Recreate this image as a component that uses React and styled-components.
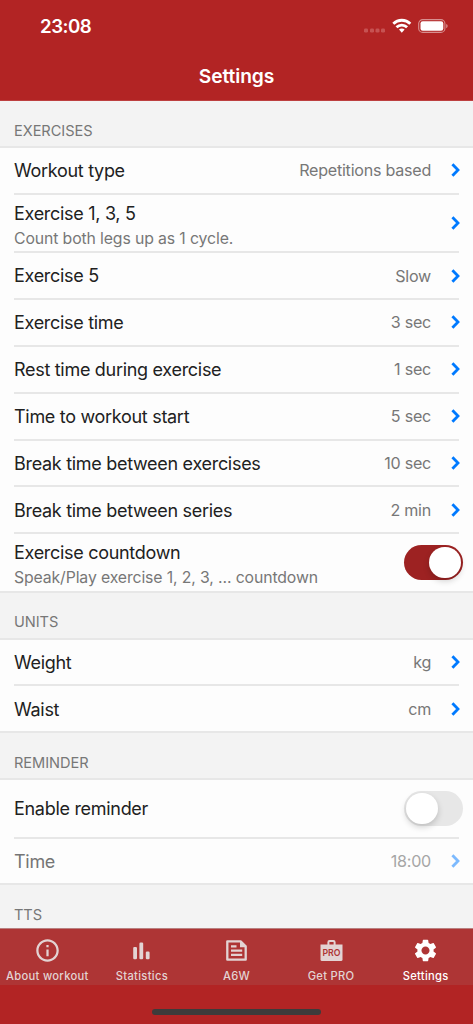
import React from 'react';
import styled, { createGlobalStyle } from 'styled-components';
import { MdInfoOutline, MdSettings } from 'react-icons/md';

const GlobalStyle = createGlobalStyle`
  * {
    box-sizing: border-box;
  }

  body {
    margin: 0;
    background: #fdfdfd;
    font-family: Inter, 'Liberation Sans', sans-serif;
  }
`;

const Screen = styled.div`
  width: 473px;
  height: 1024px;
  display: flex;
  flex-direction: column;
  overflow: hidden;
  background: #fdfdfd;
`;

const Header = styled.header`
  flex: none;
  height: 101px;
  background: #b22424;
  border-bottom: 1px solid #bd4040;
  color: #fff;
`;

const StatusBar = styled.div`
  height: 52px;
  padding: 0 24px 0 40px;
  display: flex;
  align-items: center;
  justify-content: space-between;
`;

const Clock = styled.span`
  font-size: 18.7px;
  font-weight: 600;
  letter-spacing: -0.5px;
`;

const Title = styled.h1`
  margin: 0;
  height: 48px;
  line-height: 48px;
  text-align: center;
  font-size: 19.2px;
  font-weight: 600;
  letter-spacing: -0.1px;
`;

const List = styled.main`
  flex: 1;
  min-height: 0;
  overflow: hidden;
`;

const SectionTitle = styled.h2`
  margin: 0;
  height: 46.95px;
  padding: 14.7px 14px 0;
  line-height: 30px;
  background: #f3f3f3;
  border-bottom: 2px solid #e7e7e7;
  color: #777;
  font-size: 14.6px;
  font-weight: 400;
  letter-spacing: -0.05px;
`;

const Row = styled.div`
  height: ${props => (props.$tall ? '58.4px' : '46.85px')};
  margin: ${props => (props.$last ? '0' : '0 14px')};
  padding: ${props => (props.$last ? '0 14px' : '0')};
  display: flex;
  align-items: center;
  border-bottom: 2px solid #e7e7e7;
`;

const RowText = styled.div`
  flex: 1;
  white-space: nowrap;
  padding-top: ${props => (props.$sub ? '6.5px' : '1.5px')};
`;

const Label = styled.div`
  color: ${props => (props.$disabled ? '#757575' : '#212121')};
  font-size: 18px;
  line-height: 24px;
  letter-spacing: -0.3px;
`;

const Sub = styled.div`
  color: #777;
  font-size: 15.8px;
  line-height: 25px;
  letter-spacing: -0.12px;
`;

const Value = styled.span`
  margin-right: 20px;
  color: ${props => (props.$disabled ? '#a6a6a6' : '#777')};
  font-size: 16.1px;
  letter-spacing: -0.25px;
`;

const Chevron = styled.svg`
  width: 9px;
  height: 14px;
  margin-right: -1px;
  opacity: ${props => (props.$disabled ? 0.5 : 1)};
`;

const Switch = styled.div`
  width: 58.5px;
  height: 35.5px;
  margin-right: -3.5px;
  padding: 2px;
  border-radius: 18px;
  display: flex;
  justify-content: ${props => (props.$on ? 'flex-end' : 'flex-start')};
  background: ${props => (props.$on ? '#9d2222' : '#e7e7e7')};
`;

const Knob = styled.div`
  width: 31.5px;
  height: 31.5px;
  border-radius: 50%;
  background: #fff;
  box-shadow: 0 3px 6px rgba(0, 0, 0, 0.18);
`;

const TabBar = styled.nav`
  flex: none;
  height: 57px;
  display: flex;
  background: #ae3535;
  border-top: 1px solid #b98080;
`;

const Tab = styled.div`
  flex: 1;
  display: flex;
  flex-direction: column;
  align-items: center;
  padding-top: 8px;
  white-space: nowrap;
  color: ${props => (props.$active ? '#fff' : '#e3d3d3')};

  svg {
    display: block;
  }
`;

const TabLabel = styled.span`
  margin-top: 4px;
  font-size: 11.2px;
  line-height: 16px;
  font-weight: 500;
  letter-spacing: 0.3px;
`;

const HomeArea = styled.div`
  flex: none;
  height: 39px;
  padding-top: 24px;
  background: #b22424;
`;

const HomeIndicator = styled.div`
  width: 169px;
  height: 6px;
  margin: 0 auto;
  border-radius: 3px;
  background: #3d3b3b;
`;

const StatusIcons = () => (
  <svg width="86" height="20" viewBox="0 0 86 20">
    <g fill="#c65252">
      <rect x="1" y="12.6" width="4" height="4" rx="1.3" />
      <rect x="7" y="12.6" width="4" height="4" rx="1.3" />
      <rect x="12.5" y="12.6" width="4" height="4" rx="1.3" />
      <rect x="18" y="12.6" width="4" height="4" rx="1.3" />
    </g>
    <g fill="none" stroke="#fff" strokeWidth="2.8">
      <path d="M30.3 7.7a12.2 12.2 0 0 1 17 0" />
      <path d="M33.5 11.2a7.6 7.6 0 0 1 10.6 0" />
    </g>
    <path d="M36 13.6a3.9 3.9 0 0 1 5.6 0L38.8 16.7Z" fill="#fff" />
    <rect x="55.7" y="3.6" width="26.2" height="12.8" rx="4" fill="none" stroke="#d88f8f" strokeWidth="1.1" />
    <rect x="57.5" y="5.2" width="22.8" height="9.6" rx="2.2" fill="#fff" />
    <path d="M83.2 8v4.2q1.5-.7 1.5-2.1t-1.5-2.1Z" fill="#d88f8f" />
  </svg>
);

const StatsIcon = () => (
  <svg width="27" height="27" viewBox="0 0 27 27" fill="currentColor">
    <rect x="5.2" y="9.9" width="3.8" height="12.3" rx="1.2" />
    <rect x="11.4" y="5.5" width="3.8" height="16.7" rx="1.2" />
    <rect x="17.8" y="14.5" width="3.8" height="7.7" rx="1.2" />
  </svg>
);

const FeedIcon = () => (
  <svg width="27" height="27" viewBox="0 0 27 27">
    <path
      d="M4.3 4.3h13.3l5.1 5.1v13.3H4.3Z"
      fill="none"
      stroke="currentColor"
      strokeWidth="2.3"
      strokeLinejoin="round"
    />
    <path d="M17 4v6.3h6Z" fill="currentColor" />
    <path d="M8 9.4h5.5M8 13.6h11.2M8 17.9h11.2" stroke="currentColor" strokeWidth="2.1" />
  </svg>
);

const ProIcon = () => (
  <svg width="27" height="27" viewBox="0 0 27 27">
    <path d="M10.4 8.5V5.2q0-1.1 1.1-1.1h4q1.1 0 1.1 1.1v3.3" fill="none" stroke="currentColor" strokeWidth="2" />
    <path d="M2.5 7.5h22v15q0 1.5-1.5 1.5H4q-1.5 0-1.5-1.5Z" fill="currentColor" />
    <text x="13.5" y="18.7" textAnchor="middle" fontSize="9.6" fontWeight="600" textLength="18" lengthAdjust="spacingAndGlyphs" fill="#ae3535">
      PRO
    </text>
  </svg>
);

const sections = [
  {
    title: 'EXERCISES',
    rows: [
      { label: 'Workout type', value: 'Repetitions based' },
      { label: 'Exercise 1, 3, 5', sub: 'Count both legs up as 1 cycle.' },
      { label: 'Exercise 5', value: 'Slow' },
      { label: 'Exercise time', value: '3 sec' },
      { label: 'Rest time during exercise', value: '1 sec' },
      { label: 'Time to workout start', value: '5 sec' },
      { label: 'Break time between exercises', value: '10 sec' },
      { label: 'Break time between series', value: '2 min' },
      { label: 'Exercise countdown', sub: 'Speak/Play exercise 1, 2, 3, ... countdown', toggle: true, on: true },
    ],
  },
  {
    title: 'UNITS',
    rows: [
      { label: 'Weight', value: 'kg' },
      { label: 'Waist', value: 'cm' },
    ],
  },
  {
    title: 'REMINDER',
    rows: [
      { label: 'Enable reminder', toggle: true, on: false },
      { label: 'Time', value: '18:00', disabled: true },
    ],
  },
  { title: 'TTS', rows: [] },
];

const tabs = [
  { label: 'About workout', icon: <MdInfoOutline size={27} /> },
  { label: 'Statistics', icon: <StatsIcon /> },
  { label: 'A6W', icon: <FeedIcon /> },
  { label: 'Get PRO', icon: <ProIcon /> },
  { label: 'Settings', icon: <MdSettings size={27} />, active: true },
];

const SettingsRow = ({ label, sub, value, toggle, on, disabled, last }) => (
  <Row $tall={sub || toggle} $last={last}>
    <RowText $sub={sub}>
      <Label $disabled={disabled}>{label}</Label>
      {sub && <Sub>{sub}</Sub>}
    </RowText>
    {value && <Value $disabled={disabled}>{value}</Value>}
    {toggle ? (
      <Switch $on={on}>
        <Knob />
      </Switch>
    ) : (
      <Chevron viewBox="0 0 9 14" $disabled={disabled}>
        <path d="M1.4 1.2 7 7l-5.6 5.8" fill="none" stroke="#007aff" strokeWidth="2.8" />
      </Chevron>
    )}
  </Row>
);

const App = () => {
  return (
    <>
      <GlobalStyle />
      <Screen>
        <Header>
          <StatusBar>
            <Clock>23:08</Clock>
            <StatusIcons />
          </StatusBar>
          <Title>Settings</Title>
        </Header>
        <List>
          {sections.map(section => (
            <section key={section.title}>
              <SectionTitle>{section.title}</SectionTitle>
              {section.rows.map((row, i) => (
                <SettingsRow key={row.label} {...row} last={i === section.rows.length - 1} />
              ))}
            </section>
          ))}
        </List>
        <TabBar>
          {tabs.map(tab => (
            <Tab key={tab.label} $active={tab.active}>
              {tab.icon}
              <TabLabel>{tab.label}</TabLabel>
            </Tab>
          ))}
        </TabBar>
        <HomeArea>
          <HomeIndicator />
        </HomeArea>
      </Screen>
    </>
  );
};

export default App;
